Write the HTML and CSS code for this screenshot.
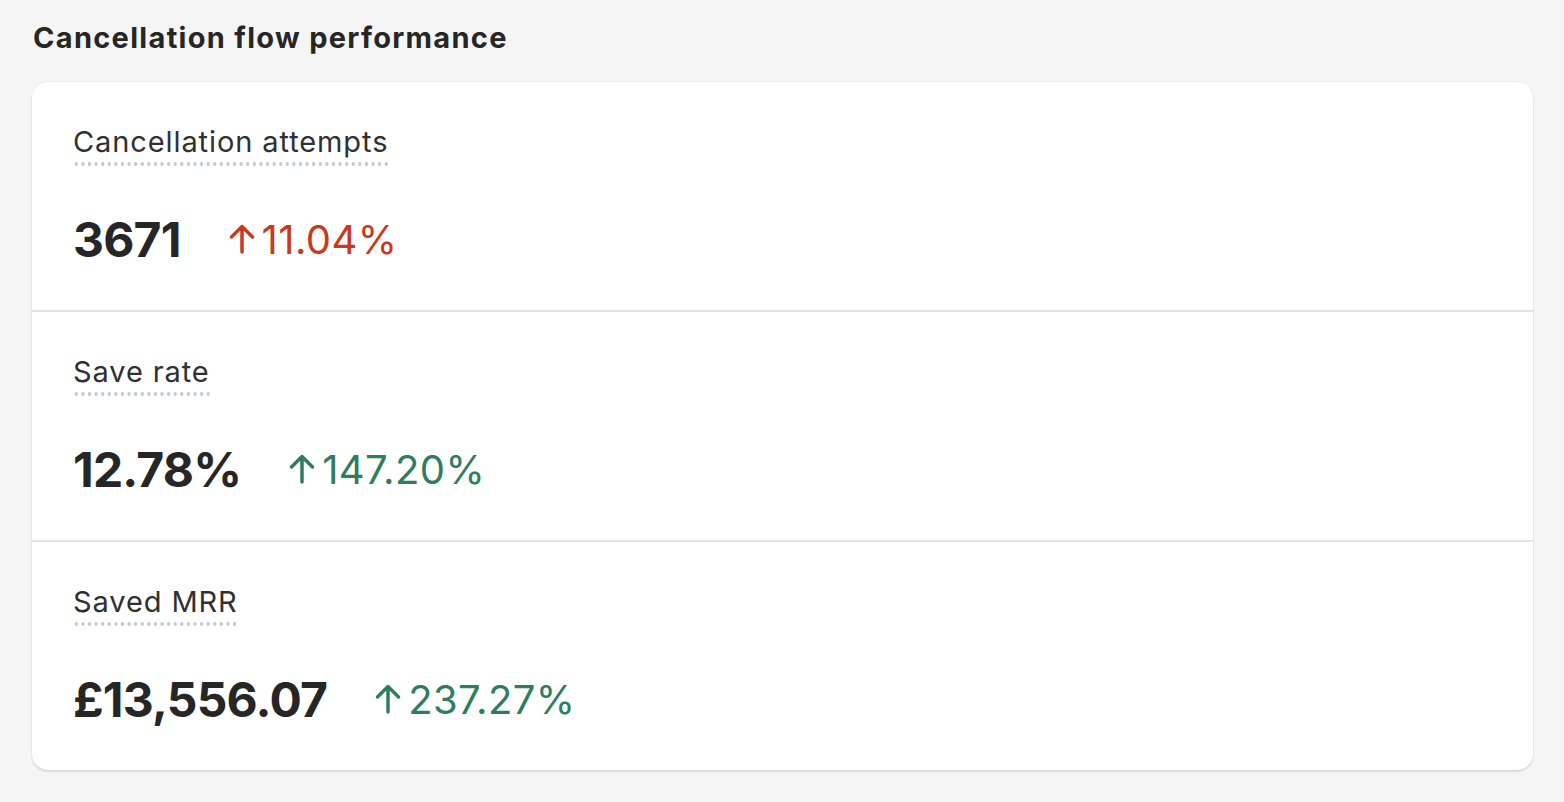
FILE: index.html
```html
<!DOCTYPE html>
<html lang="en">
<head>
  <meta charset="UTF-8" />
  <title>Cancellation flow performance</title>
  <link rel="stylesheet" href="styles.css">
</head>
<body>
  <h2 class="section-title">Cancellation flow performance</h2>
  <div class="card">
    <div class="metric">
      <span class="metric-label">Cancellation attempts</span>
      <div class="metric-values">
        <span class="metric-value">3671</span>
        <span class="trend trend-bad">
          <svg class="trend-arrow" viewBox="0 0 26 30" aria-hidden="true"><path d="M13 28V3M2.5 13L13 2.5 23.5 13"/></svg>
          11.04%
        </span>
      </div>
    </div>
    <div class="metric">
      <span class="metric-label">Save rate</span>
      <div class="metric-values">
        <span class="metric-value">12.78%</span>
        <span class="trend trend-good">
          <svg class="trend-arrow" viewBox="0 0 26 30" aria-hidden="true"><path d="M13 28V3M2.5 13L13 2.5 23.5 13"/></svg>
          147.20%
        </span>
      </div>
    </div>
    <div class="metric">
      <span class="metric-label">Saved MRR</span>
      <div class="metric-values">
        <span class="metric-value">£13,556.07</span>
        <span class="trend trend-good">
          <svg class="trend-arrow" viewBox="0 0 26 30" aria-hidden="true"><path d="M13 28V3M2.5 13L13 2.5 23.5 13"/></svg>
          237.27%
        </span>
      </div>
    </div>
  </div>
</body>
</html>
```

FILE: styles.css
```css
body {
  margin: 0;
  padding: 20px 31px 32px 32px;
  background: #f5f5f5;
  color: #303030;
  font-family: Inter, 'Noto Sans', sans-serif;
}
.section-title {
  margin: 0 0 26px 1px;
  font-size: 29px;
  line-height: 36px;
  font-weight: 700;
  letter-spacing: 1.3px;
  color: #262626;
}
.card {
  background: #fff;
  border-radius: 16px;
  box-shadow: 0 2px 2px rgba(0, 0, 0, 0.1), 0 0 0 1px rgba(0, 0, 0, 0.03);
  overflow: hidden;
}
.metric {
  display: flex;
  flex-direction: column;
  align-items: flex-start;
  gap: 45px;
  padding: 40px 41px 43px;
}
.metric + .metric {
  border-top: 2px solid #e3e3e3;
}
.metric-label {
  font-size: 29px;
  line-height: 40px;
  letter-spacing: 0.9px;
  padding-bottom: 4px;
  background-image: radial-gradient(circle, #c3c8cf 1.6px, transparent 2px);
  background-size: 6.6px 4px;
  background-repeat: repeat-x;
  background-position: left bottom;
}
.metric-values {
  display: flex;
  align-items: center;
  gap: 48px;
  height: 56px;
}
.metric-value {
  font-size: 48px;
  font-weight: 700;
  color: #262626;
  letter-spacing: -0.8px;
}
.trend {
  display: flex;
  align-items: center;
  gap: 7px;
  font-size: 40px;
  letter-spacing: 0.4px;
}
.trend-arrow {
  width: 26px;
  height: 30px;
  fill: none;
  stroke: currentColor;
  stroke-width: 3.5;
  stroke-linecap: round;
  stroke-linejoin: round;
}
.trend-bad {
  color: #c8391e;
}
.trend-good {
  color: #2f7d5c;
}
```
